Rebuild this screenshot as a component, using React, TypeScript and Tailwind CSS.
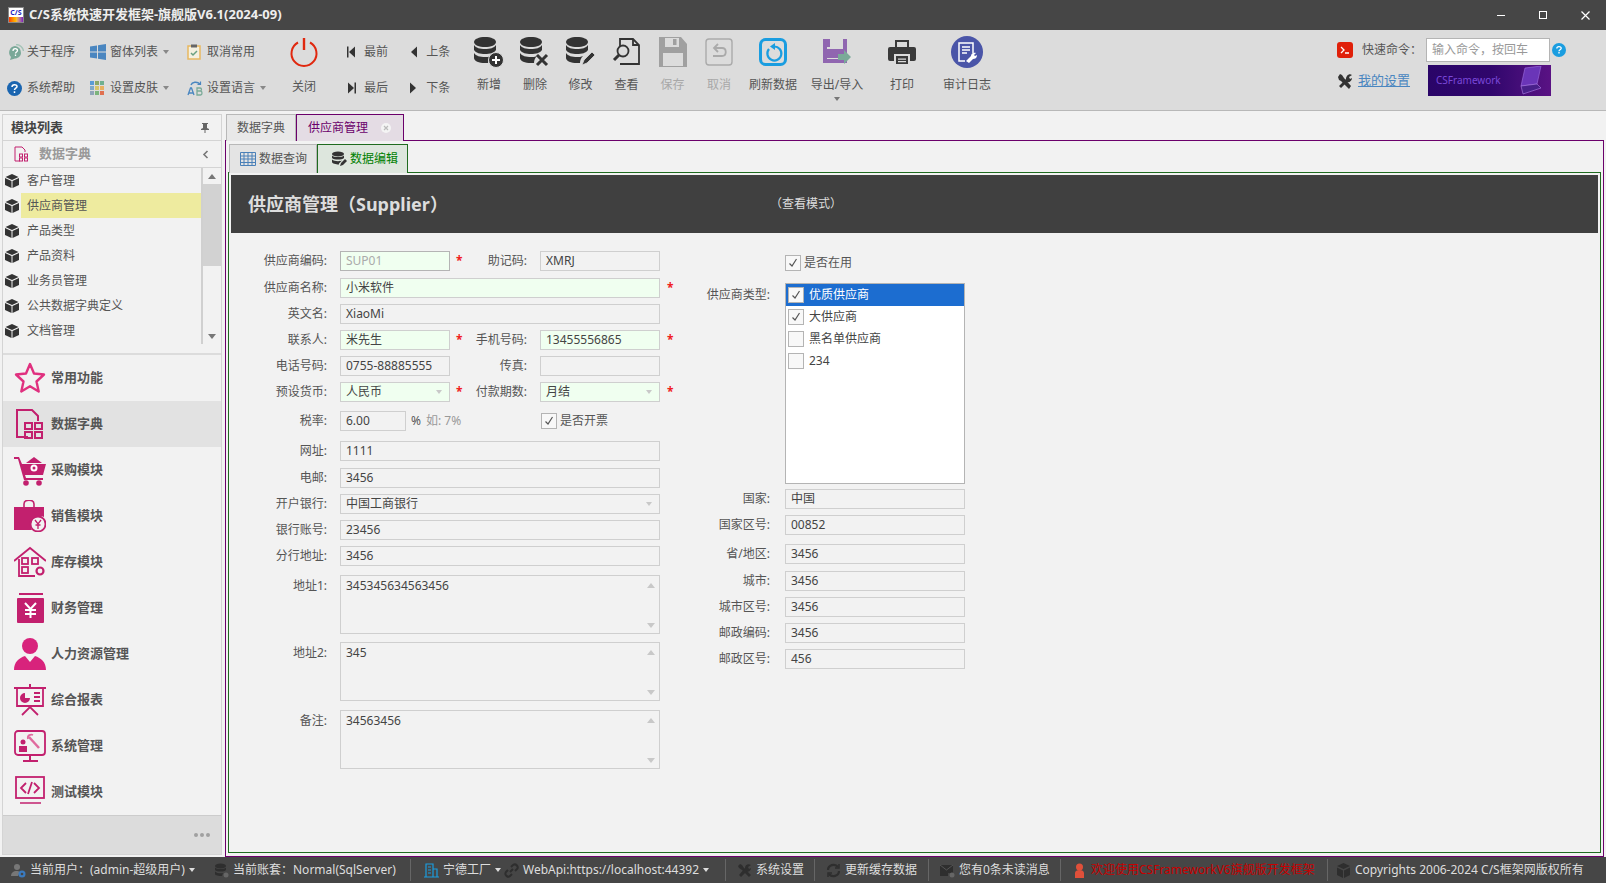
import React from "react";

const PINK = "#c2206e";

type IconProps = { className?: string };

// Database stack used by the toolbar buttons, with a small badge in children
function DbIcon({ children }: { children?: React.ReactNode }) {
  return (
    <svg width="32" height="32" viewBox="0 0 32 32" fill="#333">
      <path d="M1 6c0-3 5-5 11-5s11 2 11 5-5 5-11 5S1 9 1 6z" />
      <path d="M1 9c2 3 6 4 11 4s9-1 11-4v5c-2 3-6 4-11 4S3 17 1 14z" />
      <path d="M1 17c2 3 6 4 11 4 2 0 4 0 6-1-2 2-3 4-3 7h-3c-6 0-11-2-11-5z" />
      {children}
    </svg>
  );
}

function PowerIcon() {
  return (
    <svg width="30" height="30" viewBox="0 0 30 30" fill="none" stroke="#e0280f">
      <path d="M9 5.5a12.5 12.5 0 1 0 12 0" strokeWidth="2" />
      <path d="M15 1v12" strokeWidth="2.4" />
    </svg>
  );
}

function SmallIcon({ name }: { name: string }) {
  if (name === "about")
    return (
      <svg width="17" height="17" viewBox="0 0 17 17">
        <path d="M8 2a6.5 6.5 0 0 1 6 7c0 3-3 5.500-6 5.500L3 16l1-3a6.500 6.500 0 0 1 4-11z" fill="#7aa898" />
        <path d="M9 0.500c4 0 7 3 7.500 6.500" stroke="#a5c4b8" strokeWidth="1.400" fill="none" />
        <path d="M6 7c0-3 4.500-3 4.500-.5 0 1.500-2 1.500-2 3M8.500 10.500v1.500" stroke="#fff" strokeWidth="1.300" fill="none" />
      </svg>
    );
  if (name === "windows")
    return (
      <svg width="16" height="16" viewBox="0 0 16 16" fill="#4a86c0">
        <path d="M0 2.500l7-1v6H0zM8 1.300l8-1.300v7.500H8zM0 8.500h7v6l-7-1zM8 8.500h8V16l-8-1.300z" />
      </svg>
    );
  if (name === "clipboard")
    return (
      <svg width="14" height="16" viewBox="0 0 14 16" fill="none">
        <rect x="1" y="2" width="12" height="13" stroke="#e8b860" strokeWidth="1.500" fill="#f4f0e0" />
        <rect x="4" y="0.500" width="6" height="3" fill="#666" />
        <path d="M4 9l2 2 4-4" stroke="#6aa080" strokeWidth="1.500" />
      </svg>
    );
  if (name === "help")
    return (
      <svg width="15" height="15" viewBox="0 0 15 15">
        <circle cx="7.500" cy="7.500" r="7.500" fill="#1a65b0" />
        <path d="M5 6c0-3 5-3 5-.5 0 1.700-2.500 1.700-2.500 3.500M7.500 10.200v1.800" stroke="#fff" strokeWidth="1.500" fill="none" />
      </svg>
    );
  if (name === "skin")
    return (
      <svg width="15" height="15" viewBox="0 0 15 15">
        <rect x="0" y="0" width="4" height="4" fill="#5b9bd5" />
        <rect x="5" y="0" width="4" height="4" fill="#8aa868" />
        <rect x="10" y="0" width="4" height="4" fill="#70b090" />
        <rect x="0" y="5" width="4" height="4" fill="#7fa8c8" />
        <rect x="5" y="5" width="4" height="4" fill="#d8c468" />
        <rect x="10" y="5" width="4" height="4" fill="#e8b060" />
        <rect x="0" y="10" width="4" height="4" fill="#90a4b8" />
        <rect x="5" y="10" width="4" height="4" fill="#7cb47c" />
        <rect x="10" y="10" width="4" height="4" fill="#e07050" />
      </svg>
    );
  if (name === "lang")
    return (
      <svg width="16" height="16" viewBox="0 0 16 16" fill="none">
        <path d="M4 5c1-3 6-4 9-1" stroke="#4a86c0" strokeWidth="1.400" />
        <path d="M13.500 1.500v3h-3" stroke="#4a86c0" strokeWidth="1.200" />
        <path d="M1 15l2.500-7h1L7 15M2 13h4" stroke="#4a86c0" strokeWidth="1.300" />
        <path d="M10 8h3c2 0 2 3 0 3h-3zM10 11h3.500c2 0 2 4 0 4H10z" stroke="#7aaa98" strokeWidth="1.300" />
      </svg>
    );
  return null;
}

function ArrowIcon({ dir, bar }: { dir: "left" | "right"; bar?: boolean }) {
  return (
    <svg width="9" height="12" viewBox="0 0 9 12" fill="#333">
      {dir === "left" ? <path d="M8 0.500v11L2 6z" /> : <path d="M1 0.500v11L7 6z" />}
      {bar && (dir === "left" ? <rect x="0" y="0.500" width="1.500" height="11" /> : <rect x="7.500" y="0.500" width="1.500" height="11" />)}
    </svg>
  );
}

function ToolIcon({ name }: { name: string }) {
  if (name === "add")
    return (
      <DbIcon>
        <circle cx="23" cy="24" r="7.500" fill="#333" stroke="#dcdcdc" />
        <path d="M23 20v8M19 24h8" stroke="#fff" strokeWidth="2" />
      </DbIcon>
    );
  if (name === "delete")
    return (
      <DbIcon>
        <path d="M18 19l10 10M28 19L18 29" stroke="#333" strokeWidth="3" />
      </DbIcon>
    );
  if (name === "edit")
    return (
      <DbIcon>
        <path d="M17 29l2-5 8-8 3 3-8 8z" fill="#333" stroke="#dcdcdc" strokeWidth="0.800" />
      </DbIcon>
    );
  if (name === "view")
    return (
      <svg width="30" height="30" viewBox="0 0 30 30" fill="none" stroke="#333" strokeWidth="1.800">
        <path d="M8 9V2h13l6 6v19H8" />
        <path d="M21 2v6h6" />
        <circle cx="11" cy="14" r="5.500" />
        <path d="M7 18l-5 5" strokeWidth="3" />
      </svg>
    );
  if (name === "save")
    return (
      <svg width="30" height="32" viewBox="0 0 30 32" fill="#a0a0a0">
        <path d="M1 1h22l6 7v23H1zM7 2v9h14V2zM5 17v13h20V17z" fillRule="evenodd" />
        <rect x="15" y="3" width="3.500" height="6" />
      </svg>
    );
  if (name === "undo")
    return (
      <svg width="28" height="28" viewBox="0 0 28 28" fill="none" stroke="#aaa">
        <rect x="1" y="1" width="26" height="26" rx="3" strokeWidth="1.400" />
        <path d="M10 10h7c5 0 5 8 0 8H8" strokeWidth="1.800" />
        <path d="M13 6l-4 4 4 4" strokeWidth="1.800" />
      </svg>
    );
  if (name === "refresh")
    return (
      <svg width="28" height="28" viewBox="0 0 28 28" fill="none" stroke="#1a9de0">
        <rect x="1.500" y="1.500" width="25" height="25" rx="5" strokeWidth="3" />
        <path d="M10 11a7 7 0 1 0 5-2.500" strokeWidth="2.200" />
        <path d="M16 5v7l-5-3.500z" fill="#1a9de0" stroke="none" />
      </svg>
    );
  if (name === "export")
    return (
      <svg width="28" height="32" viewBox="0 0 28 32">
        <path d="M0 3h24v24H15v-5H4V13h16V3H7v8H0z" fill="#9066b0" />
        <rect x="0" y="3" width="4" height="24" fill="#9066b0" />
        <rect x="0" y="23" width="15" height="4" fill="#9066b0" />
        <rect x="14" y="4" width="3" height="5" fill="#dcdcdc" />
        <path d="M15 18h6v-4l7 7-7 7v-4h-6z" fill="#7aaa98" />
      </svg>
    );
  if (name === "print")
    return (
      <svg width="28" height="24" viewBox="0 0 28 24" fill="#3a3a3a">
        <path d="M7 0h14v7h-2V2H9v5H7z" />
        <path d="M2 7h24a2 2 0 0 1 2 2v10a2 2 0 0 1-2 2h-4v-7H6v7H2a2 2 0 0 1-2-2V9a2 2 0 0 1 2-2z" />
        <path d="M8 16h12v8H8zM10 18.500v1.200h8v-1.200zM10 21v1.200h8V21z" fillRule="evenodd" />
      </svg>
    );
  if (name === "audit")
    return (
      <svg width="32" height="32" viewBox="0 0 32 32" fill="none">
        <circle cx="16" cy="16" r="16" fill="#4a55a8" />
        <path d="M22 17V7H8v18h6" stroke="#fff" strokeWidth="1.500" />
        <path d="M11 11h8M11 14h8M11 17h5" stroke="#fff" strokeWidth="1.300" />
        <path d="M15 25l5-5c0-3 3-4 5-3l-2 2 1 1 2-1c0 3-2 4-4 4l-4 4z" fill="#fff" />
      </svg>
    );
  return null;
}

function NavIcon({ name }: IconProps & { name: string }) {
  const box = { width: 32, height: 32, viewBox: "0 0 32 32" };
  if (name === "star")
    return (
      <svg {...box} fill="none" stroke="#e0307f" strokeWidth="2.400">
        <path d="M16 2l4 9.500 10 1-7.500 7 2.200 10L16 24.300 7.300 29.500l2.200-10L2 12.500l10-1z" strokeLinejoin="round" />
      </svg>
    );
  if (name === "dict")
    return (
      <svg {...box} fill="none" stroke={PINK} strokeWidth="2">
        <path d="M14 29H3V2h15l6 6v5" />
        <rect x="11" y="15" width="7" height="6" />
        <rect x="21" y="15" width="7" height="6" />
        <rect x="11" y="24" width="7" height="6" />
        <rect x="21" y="24" width="7" height="6" />
      </svg>
    );
  if (name === "cart")
    return (
      <svg {...box} fill={PINK}>
        <path d="M0 3h5l3 7h24l-3 11H11l1 3h17v2H10L4 5H0z" />
        <path d="M12 9l8-6 8 6z" />
        <circle cx="12" cy="29" r="2.800" />
        <circle cx="25" cy="29" r="2.800" />
        <circle cx="20" cy="14" r="3.500" fill="#fff" />
        <circle cx="20" cy="14" r="1.500" />
      </svg>
    );
  if (name === "bag")
    return (
      <svg {...box} fill={PINK}>
        <path d="M10 7V4c0-5 10-5 10 0v3" fill="none" stroke={PINK} strokeWidth="1.600" />
        <path d="M0 7h30v10c-6-3-13 1-13 8 0 2 0 3 1 5H0z" />
        <circle cx="24" cy="24" r="7.500" fill="none" stroke={PINK} strokeWidth="1.800" />
        <path d="M21 20l3 4 3-4M24 24v5M21.500 25h5" fill="none" stroke={PINK} strokeWidth="1.300" />
      </svg>
    );
  if (name === "house")
    return (
      <svg {...box} fill="none" stroke={PINK} strokeWidth="1.800">
        <path d="M0 15L16 2l16 13" />
        <path d="M5 13v17h16" />
        <rect x="8" y="12" width="6" height="6" />
        <rect x="18" y="12" width="6" height="6" />
        <rect x="8" y="21" width="6" height="6" />
        <circle cx="26" cy="25" r="3.500" strokeWidth="2.200" />
      </svg>
    );
  if (name === "money")
    return (
      <svg {...box} fill={PINK}>
        <rect x="5" y="1" width="24" height="2" />
        <rect x="3" y="6" width="27" height="25" rx="1" />
        <path d="M11 11l5.500 6 5.500-6M16.500 17v9M11 18h11M11 22h11" fill="none" stroke="#fff" strokeWidth="2" />
      </svg>
    );
  if (name === "person")
    return (
      <svg {...box} fill="#d8237c">
        <circle cx="16" cy="8" r="8" />
        <path d="M0 32c0-8 5-12 11-14l5 6 5-6c6 2 11 6 11 14z" />
      </svg>
    );
  if (name === "board")
    return (
      <svg {...box} fill="none" stroke={PINK} strokeWidth="1.800">
        <path d="M0 4h32M16 0v4" strokeWidth="2" />
        <path d="M3 4v18h26V4" />
        <path d="M8 31l8-8 8 8" />
        <path d="M11 9a5 5 0 1 0 5 5h-5z" fill={PINK} stroke="none" />
        <path d="M20 9h6M20 13h6M20 17h6" />
      </svg>
    );
  if (name === "system")
    return (
      <svg {...box} fill="none" stroke={PINK} strokeWidth="1.800">
        <rect x="1" y="1" width="30" height="24" rx="3" />
        <path d="M9 31h15M16 25v5" strokeWidth="2" />
        <circle cx="9" cy="12" r="2.500" fill={PINK} stroke="none" />
        <path d="M5 22v-6h8v6z" fill={PINK} stroke="none" />
        <path d="M15 7l10 11" stroke="#e06a9e" strokeWidth="2.500" />
        <path d="M14 9c-1-4 3-5 5-4" stroke="#e06a9e" />
      </svg>
    );
  if (name === "code")
    return (
      <svg {...box} fill="none" stroke={PINK} strokeWidth="1.800">
        <rect x="2" y="1" width="28" height="21" />
        <path d="M6 27h21" strokeWidth="1.500" />
        <path d="M12 7l-5 5 5 5M20 7l5 5-5 5M18 6l-4 12" />
      </svg>
    );
  return null;
}

function CubeIcon() {
  return (
    <svg width="14" height="14" viewBox="0 0 14 14" fill="#333">
      <path d="M7 0l6.500 3L7 6 .5 3z" />
      <path d="M0 4l6.500 3v7L0 11zM14 4L7.500 7v7l6.500-3z" />
    </svg>
  );
}

function Caret({ className }: IconProps) {
  return <span className={`inline-block border-x-[3.500px] border-t-[4px] border-x-transparent ${className ?? "border-t-[#777]"}`} />;
}

function Star() {
  return <span className="text-[#f02020] text-[12px] font-bold leading-none">*</span>;
}

function ToolSmall({ icon, label, caret, className }: { icon: string; label: string; caret?: boolean; className: string }) {
  return (
    <div className={`flex items-center h-[24px] ${className}`}>
      <div className="w-[20px] flex items-center"><SmallIcon name={icon} /></div>
      <span>{label}</span>
      {caret && <Caret className="ml-[5px] border-t-[#888]" />}
    </div>
  );
}

function NavArrow({ dir, bar, label, className }: { dir: "left" | "right"; bar?: boolean; label: string; className: string }) {
  return (
    <div className={`flex items-center h-[24px] ${className}`}>
      <div className="w-[17px]"><ArrowIcon dir={dir} bar={bar} /></div>
      <span>{label}</span>
    </div>
  );
}

const bigButtons = [
  { icon: "add", label: "新增", w: "w-[46px]" },
  { icon: "delete", label: "删除", w: "w-[46px]" },
  { icon: "edit", label: "修改", w: "w-[45px]" },
  { icon: "view", label: "查看", w: "w-[47px]" },
  { icon: "save", label: "保存", w: "w-[45px]", off: true },
  { icon: "undo", label: "取消", w: "w-[48px]", off: true },
  { icon: "refresh", label: "刷新数据", w: "w-[60px]" },
  { icon: "export", label: "导出/导入", w: "w-[68px]", caret: true },
  { icon: "print", label: "打印", w: "w-[62px]" },
  { icon: "audit", label: "审计日志", w: "w-[68px]" },
];

function Toolbar() {
  return (
    <div className="h-[81px] shrink-0 flex bg-[#dcdcdc] border-b border-[#b8b8b8] text-[12px] text-[#555] pl-[7px]">
      <div className="w-[275px] shrink-0 flex flex-col gap-[12px] pt-[10px]">
        <div className="flex">
          <ToolSmall icon="about" label="关于程序" className="w-[83px]" />
          <ToolSmall icon="windows" label="窗体列表" caret className="w-[97px]" />
          <ToolSmall icon="clipboard" label="取消常用" className="w-[95px] -mr-[2px]" />
        </div>
        <div className="flex">
          <ToolSmall icon="help" label="系统帮助" className="w-[83px]" />
          <ToolSmall icon="skin" label="设置皮肤" caret className="w-[97px]" />
          <ToolSmall icon="lang" label="设置语言" caret className="w-[95px] -mr-[2px]" />
        </div>
      </div>
      <div className="w-[44px] shrink-0 flex flex-col items-center pt-[7px]">
        <PowerIcon />
        <span className="mt-[11px]">关闭</span>
      </div>
      <div className="w-[140px] shrink-0 pl-[21px] flex flex-col gap-[12px] pt-[10px]">
        <div className="flex">
          <NavArrow dir="left" bar label="最前" className="w-[66px]" />
          <NavArrow dir="left" label="上条" className="w-[60px]" />
        </div>
        <div className="flex">
          <NavArrow dir="right" bar label="最后" className="w-[66px]" />
          <NavArrow dir="right" label="下条" className="w-[60px]" />
        </div>
      </div>
      {bigButtons.map((b) => (
        <div key={b.label} className={`${b.w} shrink-0 flex flex-col items-center`}>
          <div className="h-[34px] mt-[5px] flex items-center justify-center"><ToolIcon name={b.icon} /></div>
          <span className={`mt-[7px] whitespace-nowrap ${b.off ? "text-[#a8a8a8]" : ""}`}>{b.label}</span>
          {b.caret && <Caret className="mt-[3px] border-t-[#777]" />}
        </div>
      ))}
      <div className="ml-auto mr-[40px] w-[229px] shrink-0 flex flex-col pt-[8px]">
        <div className="flex items-center h-[24px]">
          <svg width="16" height="16" viewBox="0 0 16 16">
            <rect width="16" height="16" rx="3" fill="#e0200a" />
            <path d="M4 5l3 3-3 3M8 11h4" stroke="#fff" strokeWidth="1.300" fill="none" />
          </svg>
          <span className="ml-[9px] w-[64px]">快速命令：</span>
          <div className="w-[124px] h-[24px] bg-white border border-[#b4b4b4] px-[5px] flex items-center text-[#999]">输入命令，按回车</div>
          <svg className="ml-[2px]" width="14" height="14" viewBox="0 0 14 14">
            <circle cx="7" cy="7" r="7" fill="#1a9de0" />
            <path d="M4.800 5.500c0-2.500 4.400-2.500 4.400-.3 0 1.500-2.200 1.500-2.200 3M7 9v1.500" stroke="#fff" strokeWidth="1.300" fill="none" />
          </svg>
        </div>
        <div className="flex items-center h-[31px] mt-[3px]">
          <svg width="16" height="16" viewBox="0 0 16 16" fill="#333">
            <path d="M1 4l2-3 2 1 2 3 7 8-2 3-8-8-2-1z" />
            <path d="M9 6c0-3 3-6 6-4l-3 2 1 2 2-1c0 3-3 5-5 4l-6 6-2-2z" />
          </svg>
          <span className="ml-[5px] w-[70px] text-[#4a86c0] underline text-[13px]">我的设置</span>
          <div className="w-[123px] h-[31px] flex items-center justify-between bg-gradient-to-r from-[#2a0568] via-[#30066c] to-[#5a1284] overflow-hidden">
            <span className="ml-[8px] text-[10px] text-[#7a48d8]">CSFramework</span>
            <svg className="mr-[6px]" width="34" height="30" viewBox="0 0 34 30" fill="none">
              <path d="M14 2l16-2-4 18-16 2z" fill="#6a35b8" stroke="#a070e0" strokeWidth="0.600" />
              <path d="M10 20l16-2 4 4-18 6z" fill="#48208a" stroke="#b080e8" strokeWidth="0.600" />
            </svg>
          </div>
        </div>
      </div>
    </div>
  );
}

const moduleList = ["客户管理", "供应商管理", "产品类型", "产品资料", "业务员管理", "公共数据字典定义", "文档管理"];

const navItems = [
  { icon: "star", label: "常用功能" },
  { icon: "dict", label: "数据字典", active: true },
  { icon: "cart", label: "采购模块" },
  { icon: "bag", label: "销售模块" },
  { icon: "house", label: "库存模块" },
  { icon: "money", label: "财务管理" },
  { icon: "person", label: "人力资源管理" },
  { icon: "board", label: "综合报表" },
  { icon: "system", label: "系统管理" },
  { icon: "code", label: "测试模块" },
];

function Sidebar() {
  return (
    <div className="w-[220px] shrink-0 mt-[3px] mb-[2px] ml-[2px] flex flex-col border border-[#d4d4d4] text-[#555] bg-[#f2f2f2]">
      <div className="h-[26px] shrink-0 flex items-center justify-between pl-[8px] pr-[12px] border-b border-[#d4d4d4]">
        <span className="text-[13px] font-bold text-[#444]">模块列表</span>
        <svg width="8" height="10" viewBox="0 0 8 10" fill="#666">
          <path d="M1 0h6v1H6v4l2 1v1H4.500v3h-1V7H0V6l2-1V1H1z" />
        </svg>
      </div>
      <div className="h-[27px] shrink-0 flex items-center pl-[11px] pr-[12px] border-b border-[#d4d4d4]">
        <svg width="15" height="16" viewBox="0 0 15 16" fill="none" stroke={PINK}>
          <path d="M6 15H1V1h7l3 3v2" />
          <rect x="5.500" y="8" width="3" height="3" />
          <rect x="10.500" y="8" width="3" height="3" />
          <rect x="5.500" y="12" width="3" height="3" />
          <rect x="10.500" y="12" width="3" height="3" />
        </svg>
        <span className="ml-[10px] text-[13px] font-bold text-[#999]">数据字典</span>
        <svg className="ml-auto" width="7" height="9" viewBox="0 0 7 9" fill="none" stroke="#777" strokeWidth="1.600">
          <path d="M5.500 1L2 4.500 5.500 8" />
        </svg>
      </div>
      <div className="h-[176px] shrink-0 flex">
        <div className="w-[200px] shrink-0 border-r-2 border-[#d0d0d0] text-[12px]">
          {moduleList.map((m) => (
            <div key={m} className="h-[25px] flex items-center pl-[2px]">
              <div className="w-[16px] shrink-0"><CubeIcon /></div>
              <span className={`flex-1 h-full flex items-center pl-[6px] ${m === "供应商管理" ? "bg-[#eeeb9f]" : ""}`}>{m}</span>
            </div>
          ))}
        </div>
        <div className="flex-1 flex flex-col items-center">
          <div className="h-[16px] flex items-center"><span className="border-x-[4px] border-b-[5px] border-x-transparent border-b-[#777]" /></div>
          <div className="w-full h-[82px] bg-[#d2d2d2]" />
          <div className="mt-auto h-[16px] flex items-center"><span className="border-x-[4px] border-t-[5px] border-x-transparent border-t-[#777]" /></div>
        </div>
      </div>
      <div className="mt-[9px] border-t-2 border-[#dcdcdc] text-[13px] font-bold flex-1 flex flex-col">
        {navItems.map((n) => (
          <div key={n.label} className={`h-[46px] shrink-0 flex items-center pl-[11px] ${n.active ? "bg-[#e2e2e2]" : ""}`}>
            <div className="w-[37px] shrink-0"><NavIcon name={n.icon} /></div>
            <span>{n.label}</span>
          </div>
        ))}
        <div className="flex-1 bg-[#dcdcdc] border-t border-[#cccccc] flex items-center justify-end pr-[11px] gap-[2px]">
          <span className="size-[4px] rounded-full bg-[#a0a0a0]" />
          <span className="size-[4px] rounded-full bg-[#a0a0a0]" />
          <span className="size-[4px] rounded-full bg-[#a0a0a0]" />
        </div>
      </div>
    </div>
  );
}

type FieldProps = { value?: string; className: string; green?: boolean; strong?: boolean; muted?: boolean; combo?: boolean };

function Field({ value, className, green, strong, muted, combo }: FieldProps) {
  return (
    <div
      className={`h-[20px] shrink-0 flex items-center justify-between px-[5px] border ${strong ? "border-[#b4b4b4]" : "border-[#cfcfcf]"} ${
        green ? "bg-[#f0fff0]" : "bg-[#f2f2f2]"
      } ${muted ? "text-[#aaa]" : "text-[#444]"} ${className}`}
    >
      <span>{value}</span>
      {combo && <Caret className="mr-[2px] border-t-[#c8c8c8]" />}
    </div>
  );
}

function Memo({ value, className }: { value: string; className: string }) {
  return (
    <div className={`w-[320px] h-[59px] shrink-0 flex justify-between pl-[5px] pt-[1px] pr-[4px] pb-[5px] border border-[#cfcfcf] text-[#444] ${className}`}>
      <span>{value}</span>
      <div className="flex flex-col justify-between pt-[6px]">
        <span className="border-x-[4px] border-b-[5px] border-x-transparent border-b-[#c8c8c8]" />
        <span className="border-x-[4px] border-t-[5px] border-x-transparent border-t-[#c8c8c8]" />
      </div>
    </div>
  );
}

function Row({ label, className, labelTop, children }: { label: string; className: string; labelTop?: boolean; children: React.ReactNode }) {
  return (
    <div className={`flex ${labelTop ? "items-start" : "items-center"} ${className}`}>
      <div className={`w-[96px] shrink-0 text-right mr-[13px] ${labelTop ? "pt-[2px]" : ""}`}>{label}:</div>
      {children}
    </div>
  );
}

function SideLabel({ text, className }: { text: string; className: string }) {
  return <div className={`text-right ${className}`}>{text}:</div>;
}

function Check({ on, className }: { on?: boolean; className?: string }) {
  return (
    <span className={`size-[16px] shrink-0 flex items-center justify-center border border-[#b4b4b4] bg-[#f8f8f8] ${className ?? ""}`}>
      {on && (
        <svg width="10" height="10" viewBox="0 0 10 10" fill="none" stroke="#555" strokeWidth="1.200">
          <path d="M1.500 5.500L4 8l4.500-7" />
        </svg>
      )}
    </span>
  );
}

const supplierTypes = [
  { label: "优质供应商", on: true, sel: true },
  { label: "大供应商", on: true },
  { label: "黑名单供应商" },
  { label: "234" },
];

function RightRow({ label, value, className }: { label: string; value: string; className: string }) {
  return (
    <div className={`flex items-center ${className}`}>
      <SideLabel text={label} className="w-[91px] shrink-0 mr-[15px]" />
      <Field value={value} className="w-[180px]" />
    </div>
  );
}

function Form() {
  return (
    <div className="flex-1 flex text-[12px] text-[#555]">
      <div className="w-[448px] shrink-0 pt-[18px]">
        <Row label="供应商编码" className="">
          <Field value="SUP01" className="w-[110px]" green strong muted />
          <span className="w-[22px] pl-[6px]"><Star /></span>
          <SideLabel text="助记码" className="w-[55px] mr-[13px]" />
          <Field value="XMRJ" className="w-[120px]" />
        </Row>
        <Row label="供应商名称" className="mt-[7px]">
          <Field value="小米软件" className="w-[320px]" green />
          <span className="pl-[7px]"><Star /></span>
        </Row>
        <Row label="英文名" className="mt-[6px]">
          <Field value="XiaoMi" className="w-[320px]" />
        </Row>
        <Row label="联系人" className="mt-[6px]">
          <Field value="米先生" className="w-[110px]" green />
          <span className="w-[22px] pl-[6px]"><Star /></span>
          <SideLabel text="手机号码" className="w-[55px] mr-[13px]" />
          <Field value="13455556865" className="w-[120px]" green />
          <span className="pl-[7px]"><Star /></span>
        </Row>
        <Row label="电话号码" className="mt-[6px]">
          <Field value="0755-88885555" className="w-[110px]" />
          <span className="w-[22px]" />
          <SideLabel text="传真" className="w-[55px] mr-[13px]" />
          <Field className="w-[120px]" />
        </Row>
        <Row label="预设货币" className="mt-[6px]">
          <Field value="人民币" className="w-[110px]" green combo />
          <span className="w-[22px] pl-[6px]"><Star /></span>
          <SideLabel text="付款期数" className="w-[55px] mr-[13px]" />
          <Field value="月结" className="w-[120px]" green combo />
          <span className="pl-[7px]"><Star /></span>
        </Row>
        <Row label="税率" className="mt-[9px]">
          <Field value="6.00" className="w-[66px]" />
          <span className="ml-[5px] w-[15px]">%</span>
          <span className="w-[115px] text-[#999]">如: 7%</span>
          <Check on />
          <span className="ml-[3px]">是否开票</span>
        </Row>
        <Row label="网址" className="mt-[10px]"><Field value="1111" className="w-[320px]" /></Row>
        <Row label="电邮" className="mt-[7px]"><Field value="3456" className="w-[320px]" /></Row>
        <Row label="开户银行" className="mt-[6px]"><Field value="中国工商银行" className="w-[320px]" combo /></Row>
        <Row label="银行账号" className="mt-[6px]"><Field value="23456" className="w-[320px]" /></Row>
        <Row label="分行地址" className="mt-[6px]"><Field value="3456" className="w-[320px]" /></Row>
        <Row label="地址1" labelTop className="mt-[9px]"><Memo value="345345634563456" className="" /></Row>
        <Row label="地址2" labelTop className="mt-[8px]"><Memo value="345" className="" /></Row>
        <Row label="备注" labelTop className="mt-[9px]"><Memo value="34563456" className="" /></Row>
      </div>
      <div className="flex-1 pt-[21px]">
        <div className="flex items-center pl-[106px]">
          <Check on />
          <span className="ml-[3px]">是否在用</span>
        </div>
        <div className="flex items-start mt-[11px]">
          <SideLabel text="供应商类型" className="w-[91px] shrink-0 mr-[15px] pt-[3px]" />
          <div className="w-[180px] h-[201px] shrink-0 bg-white border border-[#b4b4b4] text-[#444]">
            {supplierTypes.map((t) => (
              <div key={t.label} className={`h-[22px] flex items-center pl-[2px] ${t.sel ? "bg-[#1c6dd0] text-white" : ""}`}>
                <Check on={t.on} className="mr-[5px]" />
                <span>{t.label}</span>
              </div>
            ))}
          </div>
        </div>
        <RightRow label="国家" value="中国" className="mt-[5px]" />
        <RightRow label="国家区号" value="00852" className="mt-[6px]" />
        <RightRow label="省/地区" value="3456" className="mt-[9px]" />
        <RightRow label="城市" value="3456" className="mt-[7px]" />
        <RightRow label="城市区号" value="3456" className="mt-[6px]" />
        <RightRow label="邮政编码" value="3456" className="mt-[6px]" />
        <RightRow label="邮政区号" value="456" className="mt-[6px]" />
      </div>
    </div>
  );
}

function Content() {
  return (
    <div className="flex-1 min-w-0 flex flex-col mt-[3px] ml-[3px] mr-[2px] text-[12px]">
      <div className="h-[27px] shrink-0 flex items-stretch relative z-10 -mb-px">
        <div className="w-[70px] ml-px flex items-center justify-center border border-b-0 border-[#b8b8b8] bg-[#e8e8e8] text-[#555]">数据字典</div>
        <div className="w-[108px] flex items-center pl-[11px] border border-b-0 border-[#6b006b] bg-[#e4dce4] text-[#6b006b]">
          <span>供应商管理</span>
          <span className="ml-[13px] size-[10px] rounded-full bg-[#f4f4f4] flex items-center justify-center">
            <svg width="6" height="6" viewBox="0 0 6 6" stroke="#bbb" strokeWidth="1.200"><path d="M1 1l4 4M5 1L1 5" /></svg>
          </span>
        </div>
      </div>
      <div className="flex-1 min-h-0 border border-[#6b006b] bg-[#f2f2f2] flex flex-col px-[2px] pb-[3px]">
        <div className="h-[29px] shrink-0 mt-[3px] flex items-stretch relative z-10 -mb-px pl-px">
          <div className="w-[88px] flex items-center pl-[10px] border border-b-0 border-[#b8b8b8] bg-[#e4e4e4] text-[#555]">
            <svg width="16" height="14" viewBox="0 0 16 14" fill="none" stroke="#4a80b8">
              <path d="M.5.500h15v13H.5zM.5 4h15M.5 7h15M.5 10.500h15M4 .5v13M8 .5v13M12 .5v13" />
            </svg>
            <span className="ml-[3px]">数据查询</span>
          </div>
          <div className="w-[91px] flex items-center pl-[13px] border border-b-0 border-[#1f6b1f] bg-[#dde6dd] text-[#008000]">
            <svg width="16" height="16" viewBox="0 0 16 16" fill="#333">
              <ellipse cx="7" cy="3" rx="6" ry="2.500" />
              <path d="M1 4.500c2 2 10 2 12 0V7c-2 2-10 2-12 0zM1 8.500c2 2 8 2 10 1l-3 3v1c-3 0-7-1-7-2.500z" />
              <path d="M9 15l1-3 4-4 2 2-4 4z" />
            </svg>
            <span className="ml-[3px]">数据编辑</span>
          </div>
        </div>
        <div className="flex-1 min-h-0 border border-[#1f6b1f] p-[2px] flex flex-col">
          <div className="h-[58px] shrink-0 bg-[#404040] flex items-center text-[#dddddd]">
            <span className="w-[539px] pl-[17px] text-[18px] font-bold">供应商管理（Supplier）</span>
            <span className="text-[12px]">（查看模式）</span>
          </div>
          <Form />
        </div>
      </div>
    </div>
  );
}

function StatusIcon({ name }: { name: string }) {
  const box = { width: 15, height: 15, viewBox: "0 0 15 15" };
  if (name === "user")
    return (
      <svg {...box} fill="#777">
        <circle cx="6" cy="4" r="3" />
        <path d="M0 13c0-3 2-5 6-5 1 0 2 0 3 1l-2 4z" />
        <circle cx="11" cy="11" r="3.500" fill="#3a7abf" />
        <circle cx="11" cy="11" r="1.300" fill="#464646" />
      </svg>
    );
  if (name === "db")
    return (
      <svg {...box} fill="#2e2e2e">
        <ellipse cx="6.500" cy="3" rx="5.500" ry="2.500" />
        <path d="M1 4.500c2 2 9 2 11 0V7c-2 2-9 2-11 0zM1 8.500c2 2 6 2 8 1.500l-1 3c-3 0-7-.5-7-2z" />
        <circle cx="12" cy="12" r="2.500" fill="#666" />
      </svg>
    );
  if (name === "org")
    return (
      <svg {...box} fill="none" stroke="#1a9de0" strokeWidth="1.200">
        <path d="M2 14V1h7v13M9 6h4v8M0 14h15M4 4h3M4 7h3M4 10h3" />
      </svg>
    );
  if (name === "link")
    return (
      <svg {...box} fill="none" stroke="#2e2e2e" strokeWidth="2">
        <path d="M6 9l3-3M4 7l-2 2c-2 3 2 6 4 4l2-2M7 4l2-2c3-2 6 2 4 4l-2 2" />
      </svg>
    );
  if (name === "tools")
    return (
      <svg {...box} fill="#2e2e2e">
        <path d="M1 3l2-2 2 1 2 3 7 7-2 2-7-7-3-2z" />
        <path d="M8 5c0-3 3-5 6-3l-3 2 1 2 2-1c0 3-3 4-5 4l-5 5-2-2z" />
      </svg>
    );
  if (name === "refresh")
    return (
      <svg {...box} fill="none" stroke="#2e2e2e" strokeWidth="2.200">
        <path d="M2 7c0-5 7-7 10-3M13 8c0 5-7 7-10 3" />
        <path d="M13 1v4H9M2 14v-4h4" strokeWidth="1.500" />
      </svg>
    );
  if (name === "mail")
    return (
      <svg {...box} fill="#2e2e2e">
        <path d="M0 2h13v8H8v3H0z" />
        <path d="M0 2l6.500 5L13 2" stroke="#555" fill="none" />
        <circle cx="12" cy="12" r="2.500" fill="#666" />
      </svg>
    );
  if (name === "alert")
    return (
      <svg {...box} fill="#e0503a">
        <circle cx="7.500" cy="4" r="3.500" />
        <path d="M3 15v-5c0-2 2-3 4.500-3S12 8 12 10v5z" />
      </svg>
    );
  return (
    <svg {...box} fill="#2e2e2e">
      <path d="M7.500 0l6.500 3-6.500 3L1 3zM1 4.500l6 3V15l-6-3zM14 4.500l-6 3V15l6-3z" />
    </svg>
  );
}

function StatusItem({ icon, text, caret, className, textClass }: { icon: string; text: string; caret?: boolean; className: string; textClass?: string }) {
  return (
    <div className={`flex items-center whitespace-nowrap shrink-0 ${className}`}>
      <StatusIcon name={icon} />
      <span className={`ml-[4px] ${textClass ?? ""}`}>{text}</span>
      {caret && <Caret className="ml-[4px] border-t-[#dddddd]" />}
    </div>
  );
}

function StatusBar() {
  return (
    <div className="h-[26px] shrink-0 flex items-center bg-[#464646] text-[12px] text-[#dddddd] pl-[11px]">
      <StatusItem icon="user" text="当前用户：(admin-超级用户)" caret className="w-[203px]" />
      <StatusItem icon="db" text="当前账套：Normal(SqlServer)" className="w-[196px]" />
      <div className="w-px h-[22px] bg-[#666]" />
      <StatusItem icon="org" text="宁德工厂" caret className="w-[93px] pl-[13px]" />
      <StatusItem icon="link" text="WebApi:https://localhost:44392" caret className="w-[221px]" />
      <div className="w-px h-[22px] bg-[#666]" />
      <StatusItem icon="tools" text="系统设置" className="w-[88px] pl-[11px]" />
      <div className="w-px h-[22px] bg-[#666]" />
      <StatusItem icon="refresh" text="更新缓存数据" className="w-[113px] pl-[11px]" />
      <div className="w-px h-[22px] bg-[#666]" />
      <StatusItem icon="mail" text="您有0条未读消息" className="w-[131px] pl-[11px]" />
      <div className="w-px h-[22px] bg-[#666]" />
      <StatusItem icon="alert" text="欢迎使用CSFrameworkV6旗舰版开发框架" className="w-[266px] pl-[11px]" textClass="text-[#c80000]" />
      <div className="w-px h-[22px] bg-[#666]" />
      <StatusItem icon="cube" text="Copyrights 2006-2024 C/S框架网版权所有" className="pl-[8px]" />
    </div>
  );
}

export default function App() {
  return (
    <div className="w-[1606px] h-[883px] overflow-hidden flex flex-col bg-[#f2f2f2] font-['Noto_Sans','Noto_Sans_CJK_SC',sans-serif]">
      <div className="h-[30px] shrink-0 flex items-center bg-[#464646] pl-[8px] text-[#eeeeee]">
        <div className="w-[16px] h-[16px] flex flex-col overflow-hidden border border-[#888]">
          <div className="h-[9px] bg-white text-[7px] leading-[9px] font-bold text-[#2020c0] text-center">C/S</div>
          <div className="flex-1 bg-gradient-to-r from-[#ff3000] via-[#ffc000] to-[#8000c0]" />
        </div>
        <span className="ml-[5px] text-[13px] font-bold">C/S系统快速开发框架-旗舰版V6.1(2024-09)</span>
        <div className="ml-auto flex items-center">
          <div className="w-[42px] flex justify-center"><div className="w-[8px] h-px bg-white" /></div>
          <div className="w-[42px] flex justify-center"><div className="size-[8px] border border-white" /></div>
          <div className="w-[42px] flex justify-center">
            <svg width="9" height="9" viewBox="0 0 9 9" stroke="#fff" strokeWidth="1.200"><path d="M.5.500l8 8M8.500.500l-8 8" /></svg>
          </div>
        </div>
      </div>
      <Toolbar />
      <div className="flex-1 min-h-0 flex">
        <Sidebar />
        <Content />
      </div>
      <StatusBar />
    </div>
  );
}
